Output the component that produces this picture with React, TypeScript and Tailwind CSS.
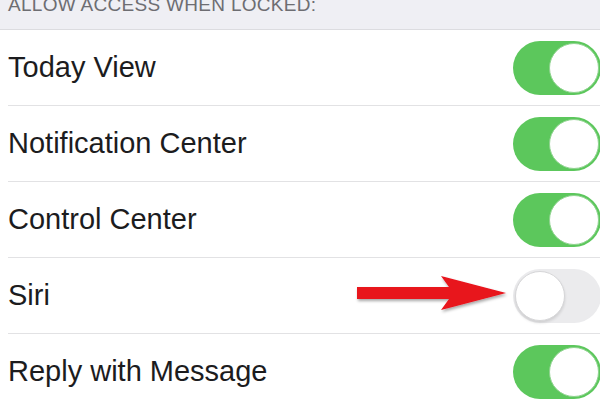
import React from "react";

const rows = [
  { label: "Today View", on: true },
  { label: "Notification Center", on: true },
  { label: "Control Center", on: true },
  { label: "Siri", on: false },
  { label: "Reply with Message", on: true },
];

function Toggle({ on }: { on: boolean }) {
  return (
    <div
      className={
        "relative w-[88px] h-[54px] shrink-0 rounded-full flex items-center p-[2px] " +
        (on ? "bg-[#5cc75c] justify-end" : "bg-[#ebebed] justify-start")
      }
    >
      <div
        className={
          "w-[50px] h-[50px] rounded-full bg-white " +
          (on ? "border border-[#8fd38f]" : "border border-[#d6d6d8] shadow-[0_2px_3px_rgba(0,0,0,0.12)]")
        }
      />
    </div>
  );
}

function Arrow() {
  return (
    <svg className="absolute left-[345px] top-[12px]" width="160" height="45" viewBox="0 0 160 45">
      <defs>
        <filter id="sh" x="-10%" y="-20%" width="130%" height="160%">
          <feDropShadow dx="1" dy="2" stdDeviation="1.5" floodColor="#000" floodOpacity="0.35" />
        </filter>
      </defs>
      <polygon
        points="4,17 96,17 88,6 153,23 88,40 96,29 4,29"
        fill="#e8121b"
        filter="url(#sh)"
      />
    </svg>
  );
}

export default function App() {
  return (
    <div className="w-[600px] h-[400px] overflow-hidden bg-white" style={{ fontFamily: '"Liberation Sans", Arial, sans-serif' }}>
      {/* section header, cut at top */}
      <div className="h-[30px] bg-[#efeff4] border-b border-[#dcdce0] relative overflow-hidden">
        <div className="absolute left-[8px] -top-[7px] text-[19px] leading-[24px] text-[#6d6d72] tracking-[0.3px]">
          ALLOW ACCESS WHEN LOCKED:
        </div>
      </div>

      {rows.map((r, i) => (
        <div key={r.label} className="pl-[8px]">
          <div
            className={
              "relative h-[76px] flex items-center justify-between " +
              (i < rows.length - 1 ? "border-b border-[#e2e2e4]" : "")
            }
          >
            <span className="text-[29px] text-[#1c1c1e]">{r.label}</span>
            <div className="mr-[-1px]">
              <Toggle on={r.on} />
            </div>
            {r.label === "Siri" && <Arrow />}
          </div>
        </div>
      ))}
    </div>
  );
}
